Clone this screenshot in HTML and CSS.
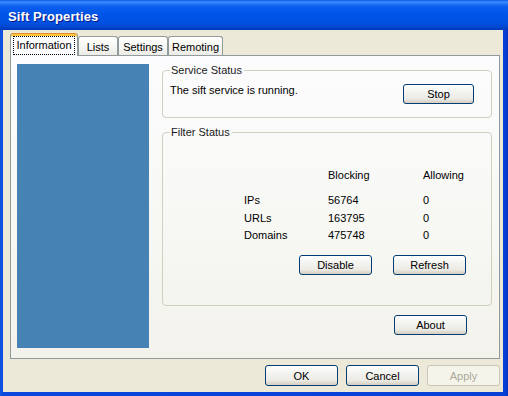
FILE: index.html
```html
<!DOCTYPE html>
<html>
<head>
<meta charset="utf-8">
<title>Sift Properties</title>
<link rel="stylesheet" href="styles.css">
</head>
<body>
<div class="window">
  <div class="titlebar"><span class="title">Sift Properties</span></div>
  <div class="client">
    <div class="tabs">
      <div class="tab tab-info selected"><span class="focus">Information</span></div>
      <div class="tab tab-lists">Lists</div>
      <div class="tab tab-settings">Settings</div>
      <div class="tab tab-remoting">Remoting</div>
    </div>
    <div class="panel">
      <div class="banner"></div>
      <div class="column">
        <fieldset class="group service">
          <legend>Service Status</legend>
          <div class="service-row">
            <span class="service-text">The sift service is running.</span>
            <button class="btn btn-stop">Stop</button>
          </div>
        </fieldset>
        <fieldset class="group filter">
          <legend>Filter Status</legend>
          <div class="stats">
            <span></span><span class="head">Blocking</span><span class="head">Allowing</span>
            <span>IPs</span><span>56764</span><span>0</span>
            <span>URLs</span><span>163795</span><span>0</span>
            <span>Domains</span><span>475748</span><span>0</span>
          </div>
          <div class="filter-actions">
            <button class="btn">Disable</button>
            <button class="btn">Refresh</button>
          </div>
        </fieldset>
        <button class="btn btn-about">About</button>
      </div>
    </div>
    <div class="dialog-buttons">
      <button class="btn btn-dlg">OK</button>
      <button class="btn btn-dlg">Cancel</button>
      <button class="btn btn-dlg disabled">Apply</button>
    </div>
  </div>
</div>
</body>
</html>
```
FILE: styles.css
```css
* { box-sizing: border-box; }

html, body {
  margin: 0;
  padding: 0;
  width: 508px;
  height: 396px;
  overflow: hidden;
}

body {
  font-family: "Liberation Sans", Arial, sans-serif;
  font-size: 11px;
  color: #000;
}

.window {
  width: 508px;
  height: 396px;
  display: flex;
  flex-direction: column;
  background: linear-gradient(to right, #0A3FD0 0, #1664EA 1px, #0A47DC 2px, #0840D6 506px, #062FB8 508px);
}

.titlebar {
  flex: 0 0 30px;
  display: flex;
  align-items: center;
  padding: 3px 0 0 8px;
  background: linear-gradient(to bottom,
    #0A5AE8 0px, #3D8EFF 2px, #2272F8 4px, #0A5DEE 7px,
    #0055E8 14px, #0052E2 22px, #0049D4 26px, #003FC2 29px, #0035B0 30px);
}

.title {
  color: #fff;
  font-family: "Liberation Sans", Arial, sans-serif;
  font-weight: bold;
  font-size: 13px;
  text-shadow: 1px 1px 0 #0A1A85;
  letter-spacing: 0.1px;
}

.client {
  flex: 1;
  margin: 0 5px 4px 3px;
  background: #ECE9D8;
  padding: 3px 3px 0 7px;
  display: flex;
  flex-direction: column;
}

.tabs {
  flex: 0 0 22px;
  display: flex;
  align-items: flex-end;
}

.tab {
  height: 19px;
  border: 1px solid #919B9C;
  border-bottom: none;
  border-radius: 3px 3px 0 0;
  background: linear-gradient(to bottom, #FFFFFF 0%, #F7F7F4 50%, #ECEBE6 100%);
  display: flex;
  align-items: center;
  justify-content: center;
  padding-top: 1px;
}

.tab-info { width: 68px; }
.tab-lists { width: 40px; }
.tab-settings { width: 50px; }
.tab-remoting { width: 55px; }

.tab.selected {
  height: 23px;
  margin-bottom: -1px;
  position: relative;
  z-index: 1;
  border-top: 1px solid #E68B2C;
  box-shadow: inset 0 2px 0 #FFC83C;
  background: #FCFCFE;
  padding-top: 0;
}

.focus {
  outline: 1px dotted #000;
  padding: 2px 2px 2px 2px;
  line-height: 13px;
}

.panel {
  flex: 0 0 304px;
  width: 490px;
  border: 1px solid #919B9C;
  border-top-color: #919B9C;
  background: linear-gradient(to bottom, #FCFCFE 0%, #F7F7F3 60%, #F3F2EC 100%);
  display: flex;
  padding: 8px 7px 0 6px;
}

.banner {
  flex: 0 0 132px;
  height: 284px;
  background: #4682B4;
}

.column {
  margin-left: 13px;
  width: 330px;
  display: flex;
  flex-direction: column;
}

.group {
  margin: 0;
  border: 1px solid #D0D0BF;
  border-radius: 4px;
  padding: 7px 17px 0 7px;
}

.group legend {
  padding: 0 2px 0 1px;
  line-height: 13px;
  color: #1A1A1A;
}

.service { padding-bottom: 13px; }

.service-row {
  display: flex;
  justify-content: space-between;
  align-items: flex-start;
}

.service-text { line-height: 13px; }

.filter {
  margin-top: 8px;
  padding-bottom: 30px;
}

.stats {
  margin: 23px 0 0 74px;
  display: grid;
  grid-template-columns: 84px 95px auto;
  grid-template-rows: 25px 18px 17px 17px;
  line-height: 13px;
}

.filter-actions {
  margin-top: 9px;
  padding-left: 129px;
  display: flex;
  gap: 21px;
}

.btn {
  font-family: "Liberation Sans", Arial, sans-serif;
  font-size: 11px;
  color: #000;
  width: 73px;
  height: 20px;
  padding: 0;
  border: 1px solid #003C74;
  border-radius: 3px;
  background: linear-gradient(to bottom, #FFFFFF 0%, #F4F4F0 35%, #ECEBE6 75%, #DCD7CB 92%, #D6D0C5 100%);
  line-height: 18px;
}

.btn-stop { width: 71px; margin-top: 0; }

.btn-about {
  align-self: flex-end;
  margin: 9px 25px 0 0;
}

.dialog-buttons {
  margin-top: 6px;
  display: flex;
  justify-content: flex-end;
  gap: 8px;
}

.btn-dlg { height: 21px; }

.btn.disabled {
  color: #ACA899;
  border-color: #C9C7BA;
  background: #F5F4EA;
}
```
